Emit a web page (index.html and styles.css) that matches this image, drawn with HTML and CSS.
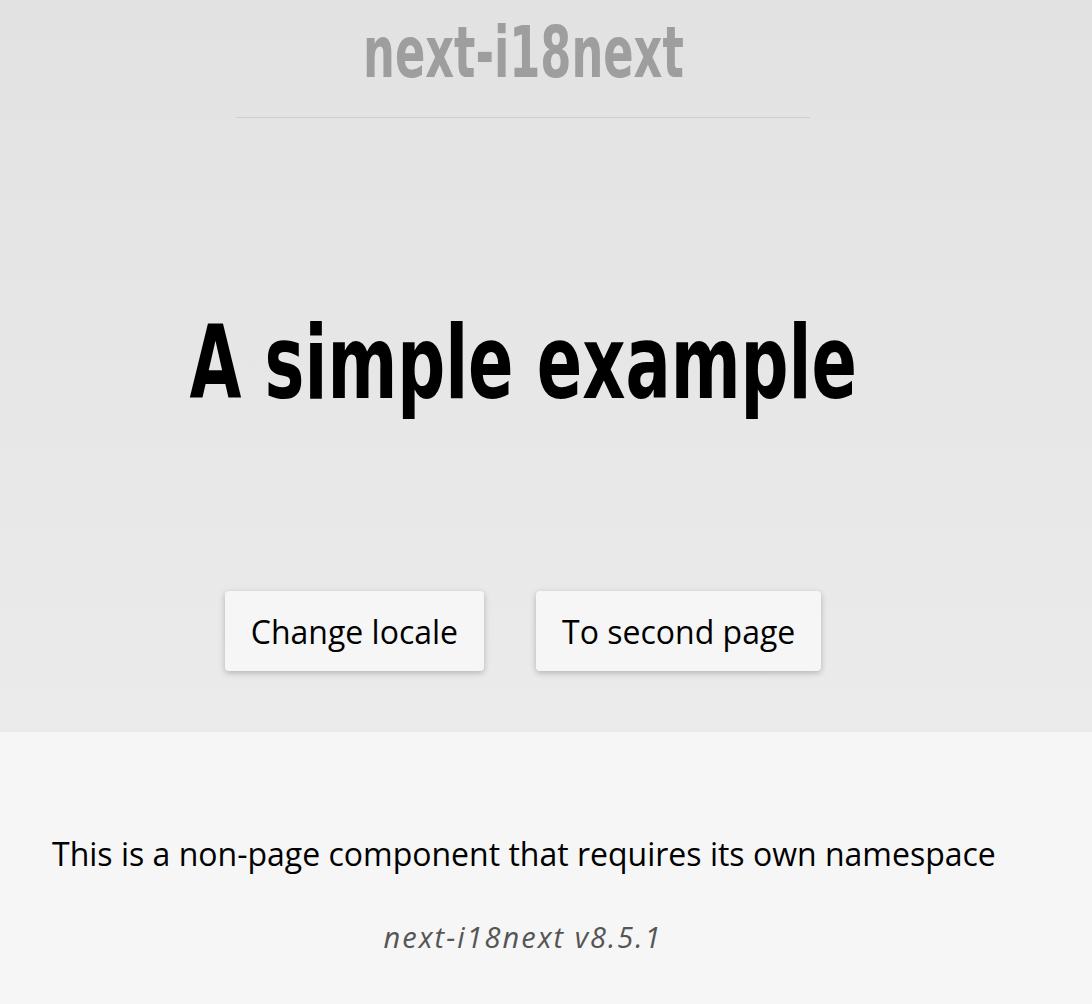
FILE: index.html
```html
<!DOCTYPE html>
<html lang="en">
<head>
<meta charset="utf-8">
<title>next-i18next</title>
<link rel="stylesheet" href="styles.css">
</head>
<body>
<main class="main">
  <div class="inner">
    <header class="site-header">
      <h2 class="brand"><span class="squeeze">next-i18next</span></h2>
      <hr class="rule">
    </header>
    <h1 class="title"><span class="squeeze">A simple example</span></h1>
    <div class="actions">
      <button class="btn" type="button">Change locale</button>
      <button class="btn" type="button">To second page</button>
    </div>
  </div>
</main>
<footer class="footer">
  <p class="note">This is a non-page component that requires its own namespace</p>
  <p class="version">next-i18next v8.5.1</p>
</footer>
</body>
</html>
```
FILE: styles.css
```css
html, body {
  margin: 0;
  padding: 0;
}
body {
  font-family: "Open Sans", "Noto Sans", sans-serif;
  background: #f6f6f6;
  min-height: 1004px;
}
.main {
  background: linear-gradient(to bottom, #e2e2e2, #ebebeb);
  height: 732px;
  box-sizing: border-box;
}
.inner {
  width: 1046px;
  display: flex;
  flex-direction: column;
  align-items: center;
}
.site-header {
  width: 574px;
  padding-top: 13px;
}
.squeeze {
  display: inline-block;
  font-family: "DejaVu Sans Condensed", "DejaVu Sans", sans-serif;
  font-stretch: condensed;
  font-weight: 700;
  transform: scaleX(0.68);
  transform-origin: center;
  white-space: nowrap;
}
.brand {
  margin: 0;
  text-align: center;
  font-size: 72px;
  line-height: 73px;
  color: #9e9e9e;
}
.brand .squeeze {
  transform: scaleX(0.69);
}
.rule {
  margin: 28px 0 0;
  border: 0;
  height: 1px;
  background: #cfcfcf;
}
.title {
  margin: 190px 0 0;
  font-size: 102px;
  line-height: 102px;
  color: #000;
  text-align: center;
}
.title .squeeze {
  transform: scaleX(0.73);
}
.actions {
  display: flex;
  gap: 52px;
  margin-top: 177px;
}
.btn {
  height: 80px;
  padding: 0 26px;
  font-family: "Open Sans", sans-serif;
  font-size: 32px;
  color: #000;
  background: #f6f6f6;
  border: 0;
  border-radius: 4px;
  box-shadow: 0 2px 6px rgba(0, 0, 0, 0.24);
}
.footer {
  padding: 100px 0 0 52px;
}
.note {
  margin: 0;
  font-size: 32px;
  color: #000;
}
.version {
  width: 942px;
  margin: 42px 0 0;
  text-align: center;
  font-size: 29px;
  letter-spacing: 2px;
  font-style: italic;
  color: #555;
}
```
